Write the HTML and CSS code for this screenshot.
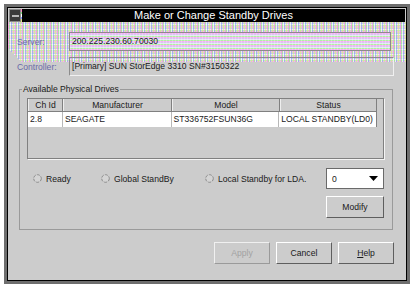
FILE: index.html
```html
<!DOCTYPE html>
<html>
<head>
<meta charset="utf-8">
<link rel="stylesheet" href="styles.css">
</head>
<body>
<div class="dialog">
  <div class="titlebar">
    <div class="menubtn"><span class="dash"></span></div>
    <div class="sep"></div>
    <div class="title">Make or Change Standby Drives</div>
  </div>
  <div class="body">
    <div class="form">
      <div class="row">
        <span class="lbl">Server:</span>
        <div class="field server">200.225.230.60.70030</div>
      </div>
      <div class="row">
        <span class="lbl">Controller:</span>
        <div class="field ctrl">[Primary] SUN StorEdge 3310 SN#3150322</div>
      </div>
    </div>
    <div class="group">
      <span class="legend">Available Physical Drives</span>
      <div class="table">
        <div class="thead">
          <div class="th c1">Ch Id</div>
          <div class="th c2">Manufacturer</div>
          <div class="th c3">Model</div>
          <div class="th c4">Status</div>
        </div>
        <div class="tr">
          <div class="td c1">2.8</div>
          <div class="td c2">SEAGATE</div>
          <div class="td c3">ST336752FSUN36G</div>
          <div class="td c4">LOCAL STANDBY(LD0)</div>
        </div>
      </div>
      <div class="opts">
        <div class="radio r1"><svg class="rb" width="9" height="9" viewBox="0 0 9 9"><circle cx="4.5" cy="4.5" r="3.8" fill="#d4d4d4" stroke="#8a8a8a" stroke-width="1" stroke-dasharray="3 1.2"/></svg>Ready</div>
        <div class="radio r2"><svg class="rb" width="9" height="9" viewBox="0 0 9 9"><circle cx="4.5" cy="4.5" r="3.8" fill="#d4d4d4" stroke="#8a8a8a" stroke-width="1" stroke-dasharray="3 1.2"/></svg>Global StandBy</div>
        <div class="radio r3"><svg class="rb" width="9" height="9" viewBox="0 0 9 9"><circle cx="4.5" cy="4.5" r="3.8" fill="#d4d4d4" stroke="#8a8a8a" stroke-width="1" stroke-dasharray="3 1.2"/></svg>Local Standby for LDA.</div>
        <div class="combo"><span class="val">0</span><svg width="9" height="5" viewBox="0 0 9 5"><polygon points="0,0 9,0 4.5,5" fill="#000"/></svg></div>
      </div>
      <div class="modrow"><div class="btn">Modify</div></div>
    </div>
    <div class="actions">
      <div class="btn disabled">Apply</div>
      <div class="btn">Cancel</div>
      <div class="btn"><span class="ul">H</span>elp</div>
    </div>
  </div>
</div>
</body>
</html>
```
FILE: styles.css
```css
* { box-sizing: border-box; }

body {
  margin: 0;
  background: #ffffff;
  font-family: "Liberation Sans", Arial, sans-serif;
  font-size: 8.6px;
  color: #1a1a1a;
}

.dialog {
  margin: 4px 0 0 4px;
  width: 406px;
  height: 280px;
  border: 3px solid #6e6e6e;
  box-shadow: inset 0 0 0 1px #000;
  padding: 1px;
  background: #cccccc;
  display: flex;
  flex-direction: column;
}

.titlebar {
  margin: 1px 1px 0 1px;
  height: 13px;
  background: #000;
  display: flex;
  align-items: stretch;
}

.menubtn {
  width: 12px;
  background: #3a3a3a;
  border: 1px solid #8a8a8a;
  display: flex;
  align-items: center;
  justify-content: center;
}

.dash {
  width: 7px;
  height: 2px;
  background: #b8b8b8;
}

.sep {
  width: 1px;
  background: linear-gradient(#ff80c0 0 20%, #80e080 20% 40%, #ffffff 40% 60%, #8090ff 60% 80%, #e0e080 80%);
}

.title {
  flex: 1;
  color: #fff;
  font-size: 11px;
  line-height: 13px;
  text-align: center;
  white-space: nowrap;
}

.body {
  flex: 1;
  display: flex;
  flex-direction: column;
}

.form {
  padding: 10px 0 0 9px;
  display: flex;
  flex-direction: column;
  gap: 6px;
  background-image:
    linear-gradient(to top right, #cccccc 50%, rgba(0,0,0,0) 50%),
    repeating-linear-gradient(90deg, rgba(255,130,220,.6) 0 1px, rgba(130,230,130,.5) 1px 2px, rgba(255,255,255,.6) 2px 3px, rgba(120,140,255,.5) 3px 4px, rgba(0,0,0,0) 4px 5px, rgba(230,230,110,.5) 5px 6px, rgba(0,0,0,0) 6px 7px),
    repeating-linear-gradient(0deg, #e8c2e8 0 1px, #c2e8bc 1px 2px, #f0f0f0 2px 3px, #c2caf2 3px 4px, #dadac6 4px 5px);
  background-size: 14px 14px, 100% 40px, 100% 40px;
  background-position: 0 26px, 0 0, 0 0;
  background-repeat: no-repeat;
}

.row {
  display: flex;
  align-items: center;
  height: 19px;
}

.lbl {
  width: 52px;
  color: #6a6aa8;
  white-space: nowrap;
}

.field {
  height: 19px;
  line-height: 17px;
  padding-left: 2px;
  border: 1px solid #8c8c8c;
  white-space: nowrap;
  overflow: hidden;
}

.server {
  width: 322px;
  background-image:
    repeating-linear-gradient(90deg, rgba(255,255,255,.25) 0 1px, rgba(0,0,0,0) 1px 3px),
    repeating-linear-gradient(0deg, #f4b0f4 0 1px, #b2f0a2 1px 2px, #e6e6f6 2px 3px, #dac4f2 3px 4px);
}

.ctrl {
  width: 325px;
  background: transparent;
  border-color: #8c8c8c #f0f0f0 #f0f0f0 #8c8c8c;
}

.group {
  position: relative;
  margin: 13px 0 0 11px;
  width: 374px;
  height: 141px;
  border: 1px solid #9a9a9a;
  padding: 8px 8px 0 7px;
}

.legend {
  position: absolute;
  top: -6px;
  left: 2px;
  background: #cccccc;
  padding: 0 1px;
  line-height: 11px;
  white-space: nowrap;
}

.table {
  height: 61px;
  border: 1px solid #808080;
  box-shadow: 1px 1px 0 #f4f4f4;
  background: #cccccc;
}

.thead, .tr {
  display: flex;
  width: 349px;
}

.thead {
  height: 13px;
  border-bottom: 1px solid #808080;
}

.th {
  line-height: 12px;
  text-align: center;
  border-right: 1px solid #808080;
  border-left: 1px solid #eeeeee;
  white-space: nowrap;
}

.tr {
  height: 15px;
  background: #ffffff;
  border-right: 1px solid #808080;
}

.td {
  line-height: 14px;
  padding-left: 2px;
  border-right: 1px solid #b8b8b8;
  white-space: nowrap;
  overflow: hidden;
}

.td.c4 { border-right: none; }

.c1 { width: 35px; }
.c2 { width: 109px; }
.c3 { width: 108px; }
.c4 { width: 97px; }

.opts {
  margin-top: 9px;
  height: 21px;
  display: flex;
  align-items: center;
  padding-left: 6px;
}

.radio {
  display: flex;
  align-items: center;
  gap: 4px;
  white-space: nowrap;
}

.r1 { width: 68px; }
.r2 { width: 104px; }

.combo {
  margin-left: auto;
  width: 58px;
  height: 21px;
  background: #ffffff;
  border: 1px solid #6a6a6a;
  display: flex;
  align-items: center;
  justify-content: space-between;
  padding: 0 5px 0 5px;
}

.modrow {
  margin-top: 7px;
  display: flex;
  justify-content: flex-end;
}

.btn {
  width: 58px;
  height: 22px;
  line-height: 20px;
  text-align: center;
  background: #cccccc;
  border: 1px solid;
  border-color: #ffffff #5e5e5e #5e5e5e #ffffff;
  white-space: nowrap;
}

.actions {
  margin-top: 12px;
  padding-right: 12px;
  display: flex;
  justify-content: flex-end;
  gap: 6px;
}

.actions .btn { width: 56px; }

.btn.disabled {
  color: #a2a2a2;
  border-color: #f0f0f0 #9a9a9a #9a9a9a #f0f0f0;
}

.ul { text-decoration: underline; }
```
